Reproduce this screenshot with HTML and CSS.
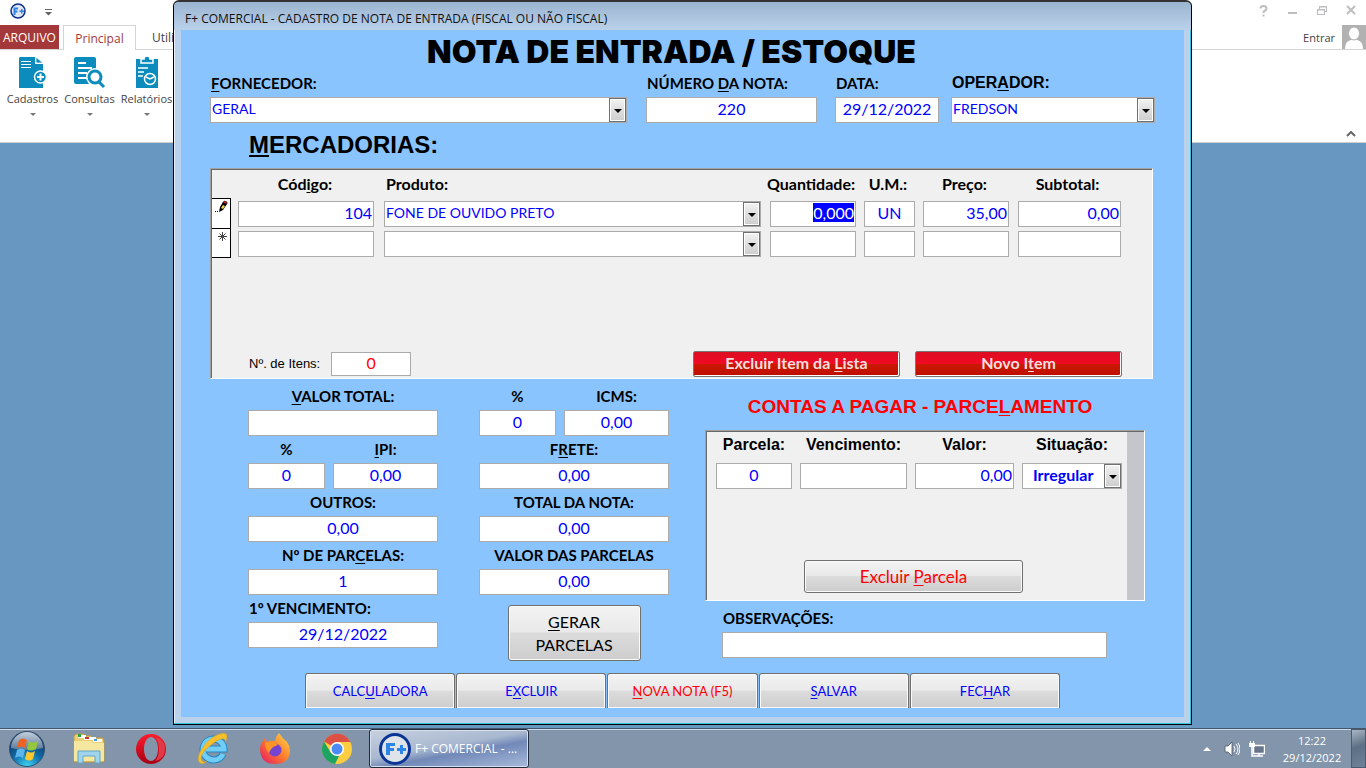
FILE: index.html
```html
<!DOCTYPE html>
<html lang="pt-BR">
<head>
<meta charset="utf-8">
<title>F+ COMERCIAL</title>
<link rel="stylesheet" href="styles.css">
</head>
<body>
<div class="desktop">
  <header class="ribbon">
    <div class="quick-bar">
      <svg class="app-logo" viewBox="0 0 32 32"><circle cx="16" cy="16" r="14" fill="#dfe6f2" stroke="#0b2f8a" stroke-width="3"/><path d="M7 9h9v4h-5v2h4v4h-4v5H7zM19 15h3v-3h3v3h3v3h-3v3h-3v-3h-3z" fill="#2b86e8"/></svg>
      <svg class="quick-more" viewBox="0 0 7 7"><path d="M0 0h7v1H0zM0 3h7L3.500 6.500z" fill="#666"/></svg>
      <div class="window-controls">
        <button type="button" aria-label="Ajuda"><svg viewBox="0 0 10 12"><path d="M1.500 3.500Q1.500 1 4.500 1T7.500 3.500Q7.500 5 5.500 6Q4.500 6.500 4.500 8M4.500 9.500v2" fill="none" stroke="#bcbec2" stroke-width="2"/></svg></button>
        <button type="button" aria-label="Minimizar"><svg viewBox="0 0 10 12"><path d="M0 7h9v2H0z" fill="#bcbec2"/></svg></button>
        <button type="button" aria-label="Restaurar"><svg viewBox="0 0 10 12"><path d="M2.500 4V1.500h7v5H8M.5 4.500h7v5h-7zM.5 5h7M2.500 2h7" fill="none" stroke="#bcbec2" stroke-width="1.200"/></svg></button>
        <button type="button" aria-label="Fechar"><svg viewBox="0 0 10 12"><path d="M1 1l8 8M9 1l-8 8" stroke="#bcbec2" stroke-width="2"/></svg></button>
      </div>
    </div>
    <nav class="tabs">
      <button type="button" class="tab tab-file">ARQUIVO</button>
      <button type="button" class="tab tab-active">Principal</button>
      <button type="button" class="tab tab-next">Utilitários</button>
      <div class="sign-in"><a href="#entrar">Entrar</a>
        <svg viewBox="0 0 24 24"><path d="M0 0h24v24H0z" fill="#b1b1b1"/><path d="M3 24q0-8 6-9h6q6 1 6 9z" fill="#fff"/><ellipse cx="12" cy="8.500" rx="5.500" ry="6.500" fill="#fff" stroke="#b1b1b1"/></svg>
      </div>
    </nav>
    <div class="commands">
      <button type="button" class="command">
        <svg viewBox="0 0 32 32"><path d="M3 0h15v7h8v24H2V1z" fill="#0c8cbc"/><path d="M19 0l7 6h-7z" fill="#0c8cbc" stroke="#fff" stroke-width=".8"/><path d="M4 4.500h10M4 7.500h10M4 10.500h10" stroke="#fff"/><circle cx="23.500" cy="20" r="6" fill="#0c8cbc" stroke="#fff" stroke-width="1.500"/><path d="M20 20h7M23.500 16.500v7" stroke="#fff" stroke-width="2"/></svg>
        <span>Cadastros</span><i class="drop"></i>
      </button>
      <button type="button" class="command">
        <svg viewBox="0 0 32 32"><path d="M2 0h18q2 0 2 2v25H2q-2 0-2-2V2q0-2 2-2z" fill="#0c8cbc"/><path d="M4 6h8M4 11h14M4 16h9M4 21h9" stroke="#fff" stroke-width="2"/><path d="M24 24l7 7" stroke="#fff" stroke-width="6"/><circle cx="21" cy="20" r="9" fill="#fff"/><circle cx="21" cy="20" r="6" fill="#fff" stroke="#0c8cbc" stroke-width="3"/><path d="M25 25l5 5" stroke="#0c8cbc" stroke-width="3"/></svg>
        <span>Consultas</span><i class="drop"></i>
      </button>
      <button type="button" class="command">
        <svg viewBox="0 0 32 32"><path d="M5 2h22v29H5z" fill="#0c8cbc"/><path d="M10 2v4h12V2l-3 0q0-3-3-3t-3 3z" fill="#0c8cbc" stroke="#fff" stroke-width="1.500"/><path d="M7 11h10M7 15h6M7 19h5" stroke="#fff" stroke-width="1.500"/><circle cx="19" cy="22" r="5.500" fill="#0c8cbc" stroke="#fff" stroke-width="1.500"/><path d="M15 20l4 2 4-2" fill="none" stroke="#fff" stroke-width="1.500"/></svg>
        <span>Relatórios</span><i class="drop"></i>
      </button>
      <svg class="collapse" viewBox="0 0 10 6"><path d="M1 5l4-4 4 4" fill="none" stroke="#666" stroke-width="2"/></svg>
    </div>
  </header>

  <main class="window">
    <div class="title-bar">F+ COMERCIAL - CADASTRO DE NOTA DE ENTRADA (FISCAL OU NÃO FISCAL)</div>
    <form class="client">
      <h1>NOTA DE ENTRADA / ESTOQUE</h1>
      <section class="head-fields">
        <div class="head-field supplier"><label for="forn"><u>F</u>ORNECEDOR:</label><div class="combo"><select id="forn"><option>GERAL</option></select><i></i></div></div>
        <div class="head-field number"><label for="num">NÚMERO <u>D</u>A NOTA:</label><input id="num" class="center" value="220"></div>
        <div class="head-field date"><label for="data">DATA:</label><input id="data" class="center" value="29/12/2022"></div>
        <div class="head-field operator"><label for="oper">OPER<u>A</u>DOR:</label><div class="combo"><select id="oper"><option>FREDSON</option></select><i></i></div></div>
      </section>

      <h2><u>M</u>ERCADORIAS:</h2>
      <section class="panel goods">
        <table>
          <colgroup><col class="c-sel"><col class="c-code"><col><col class="c-qty"><col class="c-unit"><col class="c-price"><col class="c-sub"></colgroup>
          <thead><tr><td></td><th>Cód<u>i</u>go:</th><th class="left">Produto:</th><th>Quantidade:</th><th>U.M.:</th><th>Preço:</th><th>Subtotal:</th></tr></thead>
          <tbody>
            <tr>
              <td class="selector"><svg viewBox="0 0 14 14"><path d="M1 11h1v1H1zM3 11h1v1H3z"/><path d="M5 12l1-5 3-5 4 2-4 6z"/><path d="M7 8l2-3 2 1-2 3z" fill="#f4d94a"/><path d="M9 3l1-2 3 1v2z" fill="#d22" stroke="#000" stroke-width=".6"/></svg></td>
              <td><input class="right" aria-label="Código" value="104"></td>
              <td><div class="combo"><select aria-label="Produto"><option>FONE DE OUVIDO PRETO</option></select><i></i></div></td>
              <td><input id="qty" class="right" aria-label="Quantidade" value="0,000"></td>
              <td><input class="center" aria-label="U.M." value="UN"></td>
              <td><input class="right" aria-label="Preço" value="35,00"></td>
              <td><input class="right" aria-label="Subtotal" value="0,00"></td>
            </tr>
            <tr>
              <td class="selector"><svg viewBox="0 0 14 14"><path d="M8.500 2v9M4 6.500h9M5.500 3.500l6 6M11.500 3.500l-6 6" stroke="#444" fill="none"/></svg></td>
              <td><input aria-label="Código"></td>
              <td><div class="combo"><select aria-label="Produto"><option></option></select><i></i></div></td>
              <td><input aria-label="Quantidade"></td>
              <td><input aria-label="U.M."></td>
              <td><input aria-label="Preço"></td>
              <td><input aria-label="Subtotal"></td>
            </tr>
          </tbody>
        </table>
        <div class="goods-foot">
          <label for="itens">Nº. de Itens:</label><input id="itens" class="center count" value="0">
          <button type="button" class="red-button">Excluir Item da <u>L</u>ista</button>
          <button type="button" class="red-button">Novo I<u>t</u>em</button>
        </div>
      </section>

      <section class="lower">
        <div class="column">
          <div class="field"><label for="vt"><u>V</u>ALOR TOTAL:</label><input id="vt"></div>
          <div class="pair">
            <div class="field percent"><label for="pipi">%</label><input id="pipi" class="center" value="0"></div>
            <div class="field amount"><label for="ipi"><u>I</u>PI:</label><input id="ipi" class="center" value="0,00"></div>
          </div>
          <div class="field"><label for="out">OUTROS:</label><input id="out" class="center" value="0,00"></div>
          <div class="field"><label for="np">Nº DE PAR<u>C</u>ELAS:</label><input id="np" class="center" value="1"></div>
          <div class="field first-due"><label for="venc">1º VENCIMENTO:</label><input id="venc" class="center" value="29/12/2022"></div>
        </div>
        <div class="column">
          <div class="pair">
            <div class="field percent"><label for="picms">%</label><input id="picms" class="center" value="0"></div>
            <div class="field amount"><label for="icms">ICMS:</label><input id="icms" class="center" value="0,00"></div>
          </div>
          <div class="field"><label for="frete">F<u>R</u>ETE:</label><input id="frete" class="center" value="0,00"></div>
          <div class="field"><label for="tot">TOTAL DA NOTA:</label><input id="tot" class="center" value="0,00"></div>
          <div class="field"><label for="vp">VALOR DAS PARCELAS</label><input id="vp" class="center" value="0,00"></div>
          <button type="button" class="gray-button generate"><u>G</u>ERAR<br>PARCELAS</button>
        </div>
        <div class="payables">
          <h3>CONTAS A PAGAR - PARCE<u>L</u>AMENTO</h3>
          <div class="panel installments">
            <div class="inst-body">
              <div class="inst-row">
                <div class="inst parcel"><label for="ip">Parcela:</label><input id="ip" class="center" value="0"></div>
                <div class="inst due"><label for="iv">Vencimento:</label><input id="iv"></div>
                <div class="inst value"><label for="iva">Valor:</label><input id="iva" class="right" value="0,00"></div>
                <div class="inst status"><label for="is">Situação:</label><div class="combo bold"><select id="is"><option>Irregular</option></select><i></i></div></div>
              </div>
              <button type="button" class="gray-button remove">Excluir <u>P</u>arcela</button>
            </div>
            <div class="scroll-track"></div>
          </div>
          <div class="notes"><label for="obs">OBSERVAÇÕES:</label><input id="obs"></div>
        </div>
      </section>

      <footer class="actions">
        <button type="button" class="gray-button">CALC<u>U</u>LADORA</button>
        <button type="button" class="gray-button">E<u>X</u>CLUIR</button>
        <button type="button" class="gray-button new"><u>N</u>OVA NOTA (F5)</button>
        <button type="button" class="gray-button"><u>S</u>ALVAR</button>
        <button type="button" class="gray-button">FEC<u>H</u>AR</button>
      </footer>
    </form>
  </main>

  <footer class="taskbar">
    <button type="button" class="start" aria-label="Iniciar">
      <svg viewBox="0 0 36 36"><defs><radialGradient id="orb" cx=".5" cy="1" r=".9"><stop offset="0" stop-color="#3fd8f5"/><stop offset=".5" stop-color="#0d6aa8"/><stop offset="1" stop-color="#12305c"/></radialGradient><linearGradient id="shine" x2="0" y2="1"><stop offset="0" stop-color="#c3cfdd"/><stop offset="1" stop-color="#5c7896"/></linearGradient></defs><circle cx="18" cy="18" r="17.500" fill="url(#orb)" stroke="#31506f"/><path d="M2 17a16 16 0 0 1 32 0q-16 4-32 0z" fill="url(#shine)"/><path d="M10 9q4-3 8 0l-2 8q-4-3-8 0z" fill="#ee6323"/><path d="M20 10q4 3 9 0l-2 8q-5 3-9 0z" fill="#93c83d"/><path d="M8 19q4-3 8 0l-2 8q-4-3-8 0z" fill="#5cb6ec"/><path d="M18 20q4 3 8 0l-2 8q-4 3-8 0z" fill="#fdc72e"/></svg>
    </button>
    <button type="button" class="pin" aria-label="Explorador">
      <svg viewBox="0 0 32 32"><path d="M1 3l2-2h8l2 2h5l2 2h10l1 3v21H1z" fill="#e9cf74" stroke="#b99a45"/><path d="M5 2h8v3H5z" fill="#fff"/><path d="M5 1h3v3H5z" fill="#26a53a"/><path d="M11 4h12v3H11z" fill="#fff"/><path d="M12 4h4v2h-4z" fill="#c33"/><path d="M20 6h9v3h-9z" fill="#fff"/><path d="M21 6h3v2h-3z" fill="#3aa0dd"/><path d="M1 8h17l2 2h11v18H1z" fill="#f5e6a0"/><path d="M5 18h22v12h-5v-7H10v7H5z" fill="#9fd4ec" stroke="#62a5c7"/></svg>
    </button>
    <button type="button" class="pin" aria-label="Opera">
      <svg viewBox="0 0 32 32"><defs><linearGradient id="op" x2="0" y2="1"><stop offset="0" stop-color="#ff1b2d"/><stop offset="1" stop-color="#a70014"/></linearGradient></defs><path fill-rule="evenodd" d="M16 1a15 15 0 1 0 0 30a15 15 0 1 0 0-30zM16 4c4 0 7 5 7 12s-3 12-7 12s-7-5-7-12s3-12 7-12z" fill="url(#op)"/><path d="M20 4q10 2 10 12t-10 12q4-4 4-12T20 4z" fill="#e03a46"/></svg>
    </button>
    <button type="button" class="pin" aria-label="Internet Explorer">
      <svg viewBox="0 0 32 32"><path d="M26 21a10.500 10.500 0 1 1 1-5H9" fill="none" stroke="#2487c4" stroke-width="7"/><path d="M26 21a10.500 10.500 0 1 1 1-5H9" fill="none" stroke="#6fcdf6" stroke-width="5"/><path d="M3 30C-3 25 8 8 18 3s15-3 10 7c2-6-4-5-10-1S1 22 5 28q2 2 5 0q-4 4-7 2z" fill="#f6c02c" stroke="#d69a1c" stroke-width=".5"/></svg>
    </button>
    <button type="button" class="pin" aria-label="Firefox">
      <svg viewBox="0 0 32 32"><defs><linearGradient id="fx" x1="1" x2="0" y2="1"><stop offset="0" stop-color="#ffe14d"/><stop offset=".5" stop-color="#ff7a2a"/><stop offset="1" stop-color="#e3126c"/></linearGradient></defs><path d="M20 0q3 5 8 9q3 4 3 9q-1 13-15 13T1 17q0-6 3-9l1-3 3 4q4-2 8-1q1-5 4-8z" fill="url(#fx)"/><circle cx="16" cy="17" r="6.500" fill="#7643d1"/><path d="M6 10q5-3 10 0l3 2q-4 1-6 3t-3 5q-4-4-4-10z" fill="#ff9527"/></svg>
    </button>
    <button type="button" class="pin" aria-label="Chrome">
      <svg viewBox="0 0 32 32"><circle cx="16" cy="16" r="15" fill="#ffcd40"/><path d="M3 8.500A15 15 0 0 1 29.500 9H16v7z" fill="#dd5144"/><path d="M3 8.500L10 20l8 3-4 8A15 15 0 0 1 3 8.500z" fill="#1da462"/><circle cx="16" cy="16" r="7" fill="#fff"/><circle cx="16" cy="16" r="5.500" fill="#4c8bf5"/></svg>
    </button>
    <button type="button" class="task">
      <svg viewBox="0 0 32 32"><circle cx="16" cy="16" r="14.500" fill="#dfe3ea" stroke="#0b3594" stroke-width="3"/><path d="M7 10h9v3h-5v2h4v3h-4v4H7zM18 15h3v-3h3v3h3v3h-3v3h-3v-3h-3z" fill="#2b86e8"/></svg>
      <span>F+ COMERCIAL - ...</span>
    </button>
    <div class="tray">
      <svg class="tray-up" viewBox="0 0 8 6"><path d="M0 5l4-4 4 4z" fill="#fff"/></svg>
      <svg viewBox="0 0 16 16"><path d="M1 5h3l4-4v14l-4-4H1z" fill="#fff" stroke="#4b5766" stroke-width=".8"/><path d="M10 5q2 3 0 6M12 3q4 5 0 10M14 2q4 6 0 12" fill="none" stroke="#fff"/></svg>
      <svg viewBox="0 0 16 16"><path d="M4.500 4.500h11v8h-11z" fill="#66758a" stroke="#fff" stroke-width="1.500"/><path d="M6 15h8M10 12v3M3 6v9h3" fill="none" stroke="#fff" stroke-width="1.500"/><path d="M0 2h1V0h1v2h2V0h1v2h1v4H0z" fill="#fff"/></svg>
      <div class="clock"><span>12:22</span><span>29/12/2022</span></div>
      <button type="button" class="show-desktop" aria-label="Mostrar área de trabalho"></button>
    </div>
  </footer>
</div>
<script src="script.js"></script>
</body>
</html>
```
FILE: styles.css
```css
* { box-sizing: border-box; }
body { margin: 0; font-family: "Open Sans", "Noto Sans", sans-serif; }
button { font: inherit; margin: 0; padding: 0; border: 0; background: none; color: inherit; }
h1, h2, h3 { margin: 0; }
svg { display: block; }
u { text-underline-offset: 2px; }

.desktop { position: relative; display: flex; flex-direction: column; min-height: 100vh; background: #6897c1; overflow: hidden; }

/* Ribbon */
.ribbon { height: 143px; background: #fff; border-bottom: 1px solid #d0d0d0; color: #444; font-size: 12px; }
.quick-bar { display: flex; align-items: center; height: 25px; padding: 0 10px; }
.app-logo { width: 16px; height: 16px; margin-bottom: 4px; }
.quick-more { width: 7px; height: 7px; margin-left: 19px; }
.window-controls { display: flex; gap: 19px; margin-left: auto; padding-bottom: 3px; }
.window-controls svg { width: 10px; height: 12px; }
.tabs { display: flex; height: 25px; border-bottom: 1px solid #d4d4d4; }
.tab { width: 73px; }
.tab-file { width: 59px; background: #a4373a; color: #fff; }
.tab-active { height: 25px; margin-left: 4px; background: #fff; border: 1px solid #d4d4d4; border-bottom: 0; color: #a4373a; }
.tab-next { width: 86px; }
.sign-in { display: flex; align-items: center; gap: 7px; margin-left: auto; }
.sign-in a { color: #444; text-decoration: none; font-size: 11px; }
.sign-in svg { width: 24px; height: 24px; }
.commands { display: flex; align-items: flex-start; height: 92px; padding: 7px 10px 0 4px; }
.command { display: flex; flex-direction: column; align-items: center; width: 57px; }
.command svg { width: 32px; height: 32px; overflow: visible; }
.command span { line-height: 20px; font-size: 11px; }
.drop { margin-top: 4px; border: 3px solid transparent; border-top-color: #777; }
.collapse { width: 10px; height: 6px; margin: 74px 0 0 auto; }

/* Form window */
.window { position: absolute; left: 173px; right: 174px; top: 0; padding: 0 7px 7px; background: #b9d1ea; border: 1px solid #000; border-top: 2px solid #333; border-radius: 6px 6px 0 0; box-shadow: inset -1px -1px #35c4e0, inset 1px 0 #e8f1fa; }
.title-bar { height: 28px; margin: 0 -7px; padding: 0 11px; border-radius: 5px 5px 0 0; background: linear-gradient(#9bb4d0, #b9d1ea); line-height: 33px; font-size: 12px; color: #111; white-space: nowrap; }
.client { background: #8ac4ff; padding-bottom: 9px; font-family: Lato, "Open Sans", sans-serif; color: #000; }
label, th { font-weight: bold; font-size: 15px; white-space: nowrap; }
input, select { display: block; width: 100%; min-width: 0; height: 26px; margin: 0; padding: 0 2px 3px; border: 1px solid #ababab; border-radius: 0; outline: 0; background: #fff; color: #00f; font-family: Lato, "Open Sans", sans-serif; font-size: 16px; appearance: none; }
select { padding-left: 1px; font-size: 14px; }
input::selection { background: #00f; color: #fff; }
.center { text-align: center; }
.right { padding-right: 1px; text-align: right; }
.left { text-align: left; }
.combo { position: relative; }
.combo i { position: absolute; top: 1px; right: 1px; bottom: 1px; width: 17px; border: 1px solid #707070; box-shadow: inset 0 0 0 1px #fff; background: linear-gradient(#f2f2f2, #cdcdcd); pointer-events: none; }
.combo i::after { content: ""; position: absolute; left: 4px; top: 10px; border: 4px solid transparent; border-top-color: #000; border-bottom: 0; }
.bold select { padding-left: 10px; font-weight: bold; font-size: 16px; }

h1 { height: 44px; padding-right: 22px; text-align: center; font: 900 32px/44px Inter, "Liberation Sans", sans-serif; }
.head-fields { display: flex; padding: 0 29px; }
.head-field label { display: block; padding: 0 0 5px 1px; line-height: 18px; }
.supplier { flex: 417 1 0; margin-right: 19px; }
.number { flex: 171 1 0; margin-right: 18px; }
.date { flex: 104 1 0; margin-right: 12px; }
.operator { flex: 204 1 0; }
.operator label { font: bold 16px/18px "Liberation Sans", sans-serif; }
h2 { padding-left: 68px; font: bold 24px/44px "Liberation Sans", sans-serif; }

.panel { padding: 1px 0 0 1px; background: #f0f0f0; border: 1px solid #fff; border-top-color: #a0a0a0; border-left-color: #a0a0a0; box-shadow: inset 1px 1px #696969; }
.goods { margin: 1px 31px 0 29px; }
table { width: calc(100% - 31px); table-layout: fixed; border-collapse: separate; border-spacing: 0; }
th { height: 28px; padding: 2px 0 2px 5px; line-height: 20px; font-size: 16px; }
th.left { padding-left: 12px; }
td { padding: 3px 0 1px 8px; }
thead td { padding: 0; }
td:nth-child(2) { padding-left: 7px; }
td:nth-child(3) { padding-left: 10px; }
td:nth-child(4), td:nth-child(7) { padding-left: 9px; }
.c-sel { width: 19px; }
.c-code { width: 143px; }
.c-qty { width: 95px; }
.c-unit { width: 59px; }
.c-price { width: 94px; }
.c-sub { width: 112px; }
td.selector { padding: 1px 2px; vertical-align: top; background: #fff; border: 1px solid #000; border-left: 0; border-bottom: 0; }
tr:last-child td.selector { border-bottom: 1px solid #000; }
.selector svg { width: 14px; height: 14px; }
.goods-foot { display: flex; align-items: center; gap: 15px; margin-top: 93px; padding: 0 30px 1px 37px; }
.goods-foot label { font: 13px/20px "Liberation Sans", sans-serif; margin-right: -4px; }
.count { width: 80px; height: 24px; margin-right: auto; color: #f00; }
.red-button { width: 207px; height: 26px; padding-bottom: 3px; border: 1px solid #777; border-radius: 2px; box-shadow: inset -1px -1px #fff; background: linear-gradient(#dc0f22, #f00a24 48%, #cc1a00 50%, #bd0d00); color: #f3dfdf; font-weight: bold; font-size: 16px; }

/* Totals and installments */
.lower { display: flex; padding: 4px 39px 0 67px; }
.column { flex: 190 1 0; margin-right: 41px; display: flex; flex-direction: column; }
.column + .column { margin-right: 36px; }
.pair { display: flex; gap: 8px; }
.field label { display: block; line-height: 27px; text-align: center; }
.first-due label { padding-left: 1px; text-align: left; }
.percent { flex: 77 1 0; }
.amount { flex: 105 1 0; }
.gray-button { border: 1px solid #707070; border-radius: 3px; box-shadow: inset 0 0 0 1px #fafafa; background: linear-gradient(#f3f3f3, #e9e9e9 48%, #dcdcdc 50%, #cdcdcd); }
.generate { align-self: center; width: 133px; height: 56px; margin-top: 10px; line-height: 23px; font-size: 16px; }
.payables { flex: 440 1 0; }
h3 { margin-top: 12px; padding-right: 10px; text-align: center; color: #f00; font: bold 19px/24px "Liberation Sans", sans-serif; }
.installments { display: flex; margin-top: 11px; height: 171px; }
.inst-body { flex: 1; padding: 0 5px 0 9px; }
.inst-row { display: flex; gap: 8px; }
.inst label { display: block; padding-bottom: 5px; text-align: center; font: bold 16px/26px "Liberation Sans", sans-serif; }
.parcel { flex: 76 1 0; }
.due { flex: 107 1 0; }
.value { flex: 99 1 0; }
.status { flex: 100 1 0; }
.scroll-track { width: 17px; background: #c4c6cb; }
.remove { display: block; width: 219px; height: 33px; margin: 71px 0 0 88px; color: #f00; font-size: 17px; }
.notes { padding: 4px 38px 0 17px; }
.notes label { display: block; line-height: 27px; padding-left: 1px; }
.actions { display: flex; gap: 1px; padding: 12px 124px 0; }
.actions .gray-button { flex: 1; height: 35px; border-bottom: 0; border-radius: 3px 3px 0 0; color: #00f; font-size: 13px; }
.actions .new { color: #f00; }

/* Taskbar */
.taskbar { display: flex; align-items: center; height: 40px; margin-top: auto; padding-left: 9px; border-top: 1px solid #46566a; box-shadow: inset 0 1px #c9dcef; background: #8395aa; color: #fff; font-size: 12px; }
.start svg { width: 36px; height: 36px; }
.pin { width: 62px; }
.pin svg { width: 32px; height: 32px; margin: auto; }
.start { margin-right: 13px; }
.task { display: flex; align-items: center; gap: 4px; width: 160px; height: 39px; margin-left: 1px; padding-left: 9px; border: 1px solid #222c3c; border-radius: 3px; box-shadow: inset 0 0 0 1px #d7e0ee; background: linear-gradient(170deg, #c7d1e0, #a9b8d0 45%, #7189b8 60%, #a9bbdb); font-size: 12px; white-space: nowrap; }
.task svg { width: 32px; height: 32px; }
.tray { display: flex; align-items: center; gap: 9px; height: 100%; margin-left: auto; }
.tray svg { width: 16px; height: 16px; }
.tray .tray-up { width: 8px; height: 6px; margin-right: 4px; }
.clock { display: flex; flex-direction: column; align-items: center; margin-left: 8px; width: 60px; line-height: 17px; font-size: 11px; }
.show-desktop { width: 15px; height: 100%; border: 1px solid #4c5a6b; background: linear-gradient(160deg, #a9b6c6, #5d6f84 45%, #6f8299); }
```
FILE: script.js
```javascript
const quantity = document.getElementById("qty");
quantity.focus();
quantity.select();
```
